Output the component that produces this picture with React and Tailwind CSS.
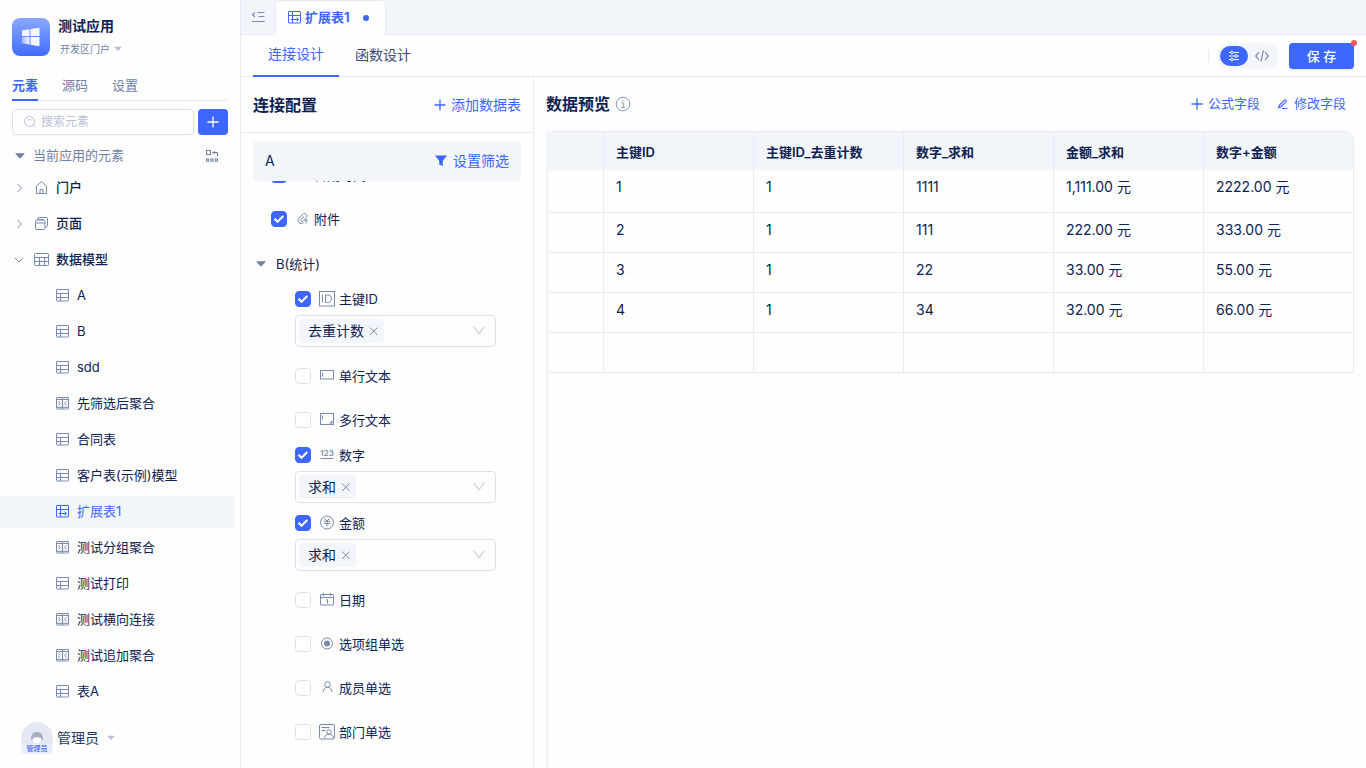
import React from "react";

function Svg({ size = 14, className = "", children, w }) {
  return (
    <svg
      width={w || size}
      height={size}
      viewBox={`0 0 ${w || size} ${size}`}
      fill="none"
      stroke="currentColor"
      strokeWidth="1"
      className={`shrink-0 ${className}`}
      aria-hidden="true"
    >
      {children}
    </svg>
  );
}

const Caret = ({ className }) => (
  <Svg w={10} size={6} className={className}>
    <path d="M0.8 0.3h8.4q.7 0 .2.6L5.7 5q-.7.7-1.4 0L.6.9Q.1.3.8.3Z" fill="currentColor" stroke="none" />
  </Svg>
);

const TableIcon = () => (
  <Svg>
    <rect x="0.5" y="0.5" width="12" height="11.5" rx="0.5" />
    <path d="M.5 4.500h12M4.500 4.500V12M4.500 8.500h8M.5 8.500h4" />
  </Svg>
);

const AggregateIcon = () => (
  <Svg>
    <rect x="0.5" y="0.5" width="12" height="11.5" rx="0.5" />
    <path d="M.5 2.500h12M.5 10.300h12M6.500 .5V12M2.500 4.500l1.800 2-1.800 2M10.500 4.500l-1.800 2 1.800 2" />
  </Svg>
);

const ExtendIcon = () => (
  <Svg>
    <rect x="0.5" y="0.5" width="12" height="11.5" rx="0.5" />
    <path d="M.5 4.500h12M4.500 .5V12M2.500 8.500h8M8.500 6.700l2 1.800-2 1.800" />
  </Svg>
);

const GridIcon = () => (
  <Svg size={16}>
    <rect x="0.5" y="1.5" width="14" height="12" rx="1" />
    <path d="M.5 5.5h14M.5 9.5h14M5.5 5.5v8M10.500 5.5v8" />
  </Svg>
);

const HomeIcon = () => (
  <Svg size={16}>
    <path d="M2.500 6 7.500 1.600 12.500 6v7.500h-10ZM6 13.500V9.500h3v4" />
  </Svg>
);

const PagesIcon = () => (
  <Svg size={16}>
    <path d="M3.500 3.500V3q0-1.500 1.500-1.500h7q1.500 0 1.500 1.500v6.500q0 1.500-1.500 1.500h-.5" />
    <rect x="1.500" y="4" width="9.500" height="9.500" rx="1.500" />
    <path d="M1.500 7h9.500M4.500 4V3.500h5.500" />
  </Svg>
);

const Plus = ({ size = 12 }) => (
  <Svg size={size}>
    <path d={`M${size / 2} .5v${size - 1}M.5 ${size / 2}h${size - 1}`} strokeWidth="1.3" />
  </Svg>
);

const fieldIcons = {
  time: (
    <Svg size={16}>
      <circle cx="8" cy="7.5" r="5.5" />
      <path d="M8 4.5v3l2 1" />
    </Svg>
  ),
  clip: (
    <Svg size={16} w={12} className="ml-0.5">
      <path d="M6.500 11.800c-1.500 1-3.500.9-4.700-.4C.6 10 .9 8.400 2 7.200l3.300-3.600C6.500 2.300 8.200 2.200 9.300 3.200c1 1 1 2.500.1 3.500L6.300 10.100c-.6.7-1.600.7-2.200.2-.6-.6-.5-1.400.2-2.200L7 5.200M9 8.500v4M7.300 9.900 9 8.300l1.800 1.600" />
    </Svg>
  ),
  id: (
    <Svg size={16}>
      <rect x="0.5" y="0.5" width="15" height="14.5" />
      <path d="M3.500 3.500v8M6.500 4v7.500h2.200c2.300 0 3.800-1.500 3.800-3.800S11 4 8.700 4Z" />
    </Svg>
  ),
  line: (
    <Svg size={16}>
      <rect x="1.500" y="2.500" width="13" height="8.500" />
      <path d="M3.500 4.500v4" />
    </Svg>
  ),
  area: (
    <Svg size={16}>
      <rect x="1.500" y="1.500" width="13" height="11" />
      <path d="M3.500 3.500v4" />
      <path d="M13.500 8v3.500H10Z" fill="currentColor" stroke="none" />
    </Svg>
  ),
  num: (
    <Svg size={16}>
      <text x="8" y="8.500" textAnchor="middle" fontSize="8" fontWeight="600" fill="currentColor" stroke="none">
        123
      </text>
      <path d="M1.500 11.500h13" />
    </Svg>
  ),
  money: (
    <Svg size={16}>
      <circle cx="8" cy="7.5" r="6.500" />
      <path d="M5.500 3.500 8 6l2.500-2.500M4.800 6.300h6.400M4.800 8.500h6.400M8 6v5.500" />
    </Svg>
  ),
  date: (
    <Svg size={16}>
      <rect x="1.500" y="2.500" width="13" height="10.500" rx="0.500" />
      <path d="M1.500 5.500h13M4.500 1v3M11.500 1v3M7.300 8.200l1.200-.7V11.500" />
    </Svg>
  ),
  radio: (
    <Svg size={16}>
      <circle cx="8" cy="7.500" r="5.500" />
      <circle cx="8" cy="7.500" r="3" fill="currentColor" stroke="none" />
    </Svg>
  ),
  user: (
    <Svg size={16}>
      <circle cx="8.500" cy="4.500" r="2.800" />
      <path d="M4 12c.3-2.800 1.700-4.600 4.500-4.600s4.200 1.800 4.500 4.600" />
    </Svg>
  ),
  dept: (
    <Svg size={16}>
      <rect x="0.500" y="0.500" width="15" height="14.500" rx="1.500" />
      <path d="M2.500 3.500h8M2.500 6.500h4" />
      <circle cx="10" cy="8" r="2.200" />
      <path d="M5.500 14c.3-2.300 1.900-3.800 4.500-3.800s4 1.500 4.500 3.800" />
    </Svg>
  ),
};

const elements = [
  ["A", TableIcon],
  ["B", TableIcon],
  ["sdd", TableIcon],
  ["先筛选后聚合", AggregateIcon],
  ["合同表", TableIcon],
  ["客户表(示例)模型", TableIcon],
  ["扩展表1", ExtendIcon, true],
  ["测试分组聚合", AggregateIcon],
  ["测试打印", TableIcon],
  ["测试横向连接", AggregateIcon],
  ["测试追加聚合", AggregateIcon],
  ["表A", TableIcon],
];

const groups = [
  ["门户", HomeIcon, false],
  ["页面", PagesIcon, false],
  ["数据模型", GridIcon, true],
];

function Sidebar() {
  return (
    <aside className="flex w-[241px] shrink-0 flex-col border-r border-[#e8ebf3]">
      <header className="flex gap-2 px-3 pt-[18px]">
        <div className="grid size-[38px] place-items-center rounded-lg bg-linear-to-b from-[#8ba7ff] to-[#426bff]">
          <svg width="20" height="20" viewBox="0 0 20 20" aria-hidden="true">
            <defs>
              <linearGradient id="pane" x1="0" y1="0" x2="1" y2="0">
                <stop offset="0" stopColor="#fff" stopOpacity="0.4" />
                <stop offset="1" stopColor="#fff" />
              </linearGradient>
            </defs>
            <path d="M1 3.200 8.500 2.200v6.800H1ZM9.500 2 18.500 .7v8.300h-9ZM9.500 10h9v9.200l-9-1.500Z" fill="#fff" fillOpacity="0.93" />
            <path d="M1 10h7.500v7.500L1 16.200Z" fill="url(#pane)" />
          </svg>
        </div>
        <div>
          <h1 className="text-[14px] leading-4 font-bold">测试应用</h1>
          <button className="mt-[7px] flex items-center gap-1 px-0.5 text-[10px] leading-4 text-[#6f80a5]">
            开发区门户
            <Caret className="w-2 text-[#b9c2d8]" />
          </button>
        </div>
      </header>
      <nav className="mx-3 mt-[18px] flex gap-6 border-b border-[#e8ebf3] text-[13px] leading-5 text-[#6f80a5]">
        <a href="#elements" className="-mb-px border-b-2 border-[#3d67ff] pb-1 font-bold text-[#3d67ff]">元素</a>
        <a href="#source">源码</a>
        <a href="#settings">设置</a>
      </nav>
      <div className="mx-3 mt-2 flex gap-1">
        <label className="flex h-[26px] min-w-0 flex-1 items-center gap-1 rounded-[4px] border border-[#dce1ed] px-2.5">
          <Svg size={14} className="text-[#b9c2d8]">
            <circle cx="6.500" cy="6.500" r="5" />
            <path d="m10.200 10.200 2.300 2.300M4.500 5.200q2-1.500 4 0" />
          </Svg>
          <input aria-label="搜索元素" placeholder="搜索元素" className="w-full min-w-0 text-[12px] outline-none placeholder:text-[#b9c2d8]" />
        </label>
        <button aria-label="新建" className="grid h-[26px] w-[30px] place-items-center rounded-[4px] bg-[#3d67ff] text-white">
          <Plus />
        </button>
      </div>
      <div className="mt-2 flex h-[26px] items-center pr-[21px] pl-[15px] text-[13px] text-[#6f80a5]">
        <Caret />
        <span className="ml-2 flex-1">当前应用的元素</span>
        <button aria-label="排列方式">
          <Svg size={14}>
            <rect x="1.500" y="1.500" width="4" height="4" />
            <path d="M7.500 3.500h5v4M9.300 2v3" />
            <rect x="1.500" y="10" width="2.200" height="2.200" />
            <rect x="5.900" y="10" width="2.200" height="2.200" />
            <rect x="10.300" y="10" width="2.200" height="2.200" />
          </Svg>
        </button>
      </div>
      <ul className="mt-[3px] flex min-h-0 flex-1 flex-col gap-1 overflow-hidden pr-1.5 text-[13px]">
        {groups.map(([name, Icon, open]) => (
          <li key={name} className="flex h-8 shrink-0 items-center pl-[14px]">
            <Svg size={10} className="text-[#7a8aae]">
              <path d={open ? "M1 3l4 4 4-4" : "M3.500 1l4 4-4 4"} />
            </Svg>
            <span className="ml-2.5 text-[#7a8aae]"><Icon /></span>
            <a href="#group" className="ml-1.5 font-medium">{name}</a>
          </li>
        ))}
        {elements.map(([name, Icon, active]) => (
          <li key={name} className={active ? "shrink-0 bg-[#f2f5fa] text-[#3d67ff]" : "shrink-0"}>
            <a href="#item" className="flex h-8 items-center gap-[7px] pl-14">
              <span className={active ? "" : "text-[#7a8aae]"}><Icon /></span>
              {name}
            </a>
          </li>
        ))}
      </ul>
      <button className="flex h-[60px] shrink-0 items-center px-[21px] text-[14px] text-[#26375f]">
        <span className="relative grid size-8 place-items-center rounded-full bg-[#e4e8f2]">
          <Svg size={14} className="text-[#a3adc4]">
            <path d="M1 8q0-7 6-7t6 7l-1 2-1-3q-4-.5-5-1-1 1-3 1l-1 3Z" fill="currentColor" stroke="none" />
            <path d="M3 7q3 0 4-1 2 1 4 1v3q-4 5-8 0Z" fill="#fff" stroke="none" />
          </Svg>
          <span className="absolute inset-x-0 bottom-0 rounded-[4px] bg-[#e8edff] text-[7px] leading-[10px] font-medium text-[#3d67ff]">管理员</span>
        </span>
        <span className="ml-1 leading-5">管理员</span>
        <Caret className="ml-2 w-2 text-[#b9c2d8]" />
      </button>
    </aside>
  );
}

function Check({ id, checked }) {
  return (
    <span className="grid size-4 shrink-0 place-items-center">
      <input
        id={id}
        type="checkbox"
        defaultChecked={checked}
        className="peer col-start-1 row-start-1 size-4 appearance-none rounded-[4px] border border-[#dce1ed] bg-white checked:border-[#3d67ff] checked:bg-[#3d67ff]"
      />
      <Svg size={12} className="pointer-events-none col-start-1 row-start-1 text-white opacity-0 peer-checked:opacity-100">
        <path d="m1.500 5.800 3 3 5.800-5.800" strokeWidth="2" />
      </Svg>
    </span>
  );
}

function Field({ id, icon, name, checked, agg, iconGap = "gap-1" }) {
  const label = (
    <>
      <Check id={id} checked={checked} />
      <label htmlFor={id} className={`ml-2 flex items-center ${iconGap}`}>
        <span className="text-[#7a8aae]">{fieldIcons[icon]}</span>
        <span className="pt-0.5">{name}</span>
      </label>
    </>
  );
  if (!agg) return <div className="flex h-11 items-center">{label}</div>;
  return (
    <div className="h-[68px]">
      <div className="flex h-[26px] items-center">{label}</div>
      <div className="mt-[3px] flex h-8 w-[201px] items-center rounded-[4px] border border-[#dce1ed] px-[3px] text-[14px]">
        <span className="flex h-6 items-center gap-1 rounded-[4px] bg-[#f2f5fa] pr-1 pl-[9px] leading-5">
          {agg}
          <button aria-label={`移除${agg}`} className="text-[#7a8aae]">
            <Svg size={12}>
              <path d="m2 2.500 7.500 7.500M9.500 2.500 2 10" />
            </Svg>
          </button>
        </span>
        <span className="grid flex-1 items-center">
          <select aria-label={`${name}统计方式`} className="col-start-1 row-start-1 h-6 w-full appearance-none outline-none">
            <option value=""></option>
            <option>{agg}</option>
          </select>
          <Svg size={12} className="pointer-events-none col-start-1 row-start-1 mr-[7px] justify-self-end text-[#b9c2d8]">
            <path d="m1 2 5 7 5-7" />
          </Svg>
        </span>
      </div>
    </div>
  );
}

function ConfigPanel() {
  return (
    <section className="flex w-[293px] shrink-0 flex-col border-r border-[#e8ebf3]">
      <div className="flex h-14 shrink-0 items-center justify-between border-b border-[#e8ebf3] px-3">
        <h2 className="text-[16px] leading-6 font-bold">连接配置</h2>
        <button className="flex items-center gap-[5px] text-[14px] text-[#3d67ff]">
          <Plus />
          添加数据表
        </button>
      </div>
      <div className="z-10 mx-3 mt-2 flex h-10 shrink-0 items-center justify-between rounded-[4px] bg-[#f2f5fa] px-3 text-[14px] leading-5">
        A
        <button className="flex items-center gap-1.5 text-[#3d67ff]">
          <Svg size={12}>
            <path d="M.5.500h11q.5 0 .2.500L7.800 5.800v5.200L4.200 9.500V5.800L.3 1Q0 .500.500.500Z" fill="currentColor" stroke="none" />
          </Svg>
          设置筛选
        </button>
      </div>
      <div className="min-h-0 flex-1 overflow-hidden text-[13px]">
        <div className="-mt-7 pl-[30px]">
          <Field id="a-time" icon="time" name="日期时间" checked iconGap="gap-[3px]" />
          <Field id="a-file" icon="clip" name="附件" checked iconGap="gap-[5px]" />
        </div>
        <button className="flex h-[45px] items-center gap-2.5 pl-[15px]">
          <Caret className="text-[#6f80a5]" />
          <span className="pt-0.5">B(统计)</span>
        </button>
        <div className="pl-[54px]">
          <Field id="b-id" icon="id" name="主键ID" checked agg="去重计数" />
          <Field id="b-line" icon="line" name="单行文本" />
          <Field id="b-area" icon="area" name="多行文本" />
          <Field id="b-num" icon="num" name="数字" checked agg="求和" />
          <Field id="b-money" icon="money" name="金额" checked agg="求和" />
          <Field id="b-date" icon="date" name="日期" />
          <Field id="b-radio" icon="radio" name="选项组单选" />
          <Field id="b-user" icon="user" name="成员单选" />
          <Field id="b-dept" icon="dept" name="部门单选" />
        </div>
      </div>
    </section>
  );
}

const columns = ["主键ID", "主键ID_去重计数", "数字_求和", "金额_求和", "数字+金额"];
const rows = [
  ["1", "1", "1111", "1,111.00 元", "2222.00 元"],
  ["2", "1", "111", "222.00 元", "333.00 元"],
  ["3", "1", "22", "33.00 元", "55.00 元"],
  ["4", "1", "34", "32.00 元", "66.00 元"],
  ["", "", "", "", ""],
];

function PreviewPanel() {
  return (
    <section className="flex min-w-0 flex-1 flex-col px-3">
      <div className="flex h-[54px] shrink-0 items-center">
        <h2 className="text-[16px] font-bold">数据预览</h2>
        <Svg size={16} className="ml-[5px] text-[#8a98b8]">
          <circle cx="8" cy="8" r="6.800" />
          <path d="M6.500 6.800H8.200V11.500M6.300 11.500h3.800M8 4v1.300" />
        </Svg>
        <div className="ml-auto flex gap-[17px] pr-2 text-[13px] text-[#3d67ff]">
          <button className="flex items-center gap-[5px]">
            <Plus />
            公式字段
          </button>
          <button className="flex items-center gap-[5px]">
            <Svg size={12}>
              <path d="M2.200 7.500 7.300 2.200q.8-.8 1.600 0t0 1.600L3.800 9l-2.200.6ZM5 10.500h5.500" strokeWidth="1.200" />
            </Svg>
            修改字段
          </button>
        </div>
      </div>
      <div className="flex-1 border-l-[3px] border-[#f2f5fa]">
        <div className="-ml-[3px] overflow-hidden rounded-t-lg">
          <table className="w-full table-fixed border-separate border-spacing-0 text-left">
            <colgroup>
              <col className="w-[58px]" />
              <col span={5} />
            </colgroup>
            <thead className="bg-[#f2f5fa] text-[13px]">
              <tr>
                <th aria-label="序号" className="h-[39px] border-t border-r border-[#e8ebf3]" />
                {columns.map((c) => (
                  <th key={c} className="truncate border-t border-r border-[#e8ebf3] px-3 pt-1 font-semibold">{c}</th>
                ))}
              </tr>
            </thead>
            <tbody className="text-[14px] leading-5">
              {rows.map((r, i) => (
                <tr key={i} className="h-10 first:h-[43px]">
                  <td className="border-r border-b border-l-[3px] border-[#e8ebf3] border-l-[#f2f5fa]" />
                  {r.map((v, j) => (
                    <td key={j} className="truncate border-r border-b border-[#e8ebf3] px-3 pt-[7px] align-top">{v}</td>
                  ))}
                </tr>
              ))}
            </tbody>
          </table>
        </div>
      </div>
    </section>
  );
}

export default function App() {
  return (
    <div className="flex h-screen overflow-hidden bg-[#fefefe] font-[Inter,'Noto_Sans_CJK_SC',sans-serif] text-[#0e2150]">
      <Sidebar />
      <main className="flex min-w-0 flex-1 flex-col">
        <div className="flex h-[35px] shrink-0 border-b border-[#e8ebf3] bg-[#f2f5fa]">
          <button aria-label="收起侧栏" className="w-[34px] pl-2.5 text-[#7a8aae]">
            <Svg size={14}>
              <path d="M6.500 2.500h7M7.500 6.500h6M1 11.500h12.500M4 2.500 1.500 4.800 4 7" strokeWidth="1.200" />
            </Svg>
          </button>
          <a href="#tab" className="-mb-px flex items-center rounded-t-[4px] border-x border-t border-[#e8ebf3] bg-[#fefefe] px-3 text-[13px] font-bold text-[#3d67ff]">
            <ExtendIcon />
            <span className="mr-[13px] ml-[3px]">扩展表1</span>
            <span className="mr-1 size-1.5 rounded-full bg-[#3d67ff]" />
          </a>
        </div>
        <div className="flex h-[42px] shrink-0 items-center border-b border-[#e8ebf3] px-3">
          <a href="#join" className="-mb-px flex h-[42px] items-center border-b-2 border-[#3d67ff] px-[15px] pb-0.5 text-[14px] leading-5 text-[#3d67ff]">连接设计</a>
          <a href="#func" className="flex h-10 items-center px-4 pb-0.5 text-[14px] leading-5 text-[#3a4b73]">函数设计</a>
          <span className="mr-2 ml-auto h-3 w-px bg-[#e8ebf3]" />
          <div className="mr-2.5 flex items-center rounded-full bg-[#f2f5fa] p-[3px]">
            <button aria-label="可视化模式" className="grid h-5 w-7 place-items-center rounded-full bg-[#3d67ff] text-white">
              <Svg size={12}>
                <path d="M1 2.500h1.500M5.500 2.500H11M1 6h5.500M9.500 6H11M1 9.500h1.500M5.500 9.500H11" />
                <circle cx="4" cy="2.500" r="1.300" />
                <circle cx="8" cy="6" r="1.300" />
                <circle cx="4" cy="9.500" r="1.300" />
              </Svg>
            </button>
            <button aria-label="代码模式" className="grid h-5 w-7 place-items-center text-[#6f80a5]">
              <Svg size={14}>
                <path d="M4 3 .8 7 4 11M10 3l3.200 4L10 11M8.300 1.500l-2.300 11" strokeWidth="1.200" />
              </Svg>
            </button>
          </div>
          <button className="relative h-[26px] w-[65px] rounded-[4px] bg-[#3d67ff] text-[13px] leading-5 font-medium text-white shadow-sm">
            保 存
            <span className="absolute -top-[3px] -right-[3px] size-1.5 rounded-full bg-[#f05b56]" />
          </button>
        </div>
        <div className="flex min-h-0 flex-1">
          <ConfigPanel />
          <PreviewPanel />
        </div>
      </main>
    </div>
  );
}
